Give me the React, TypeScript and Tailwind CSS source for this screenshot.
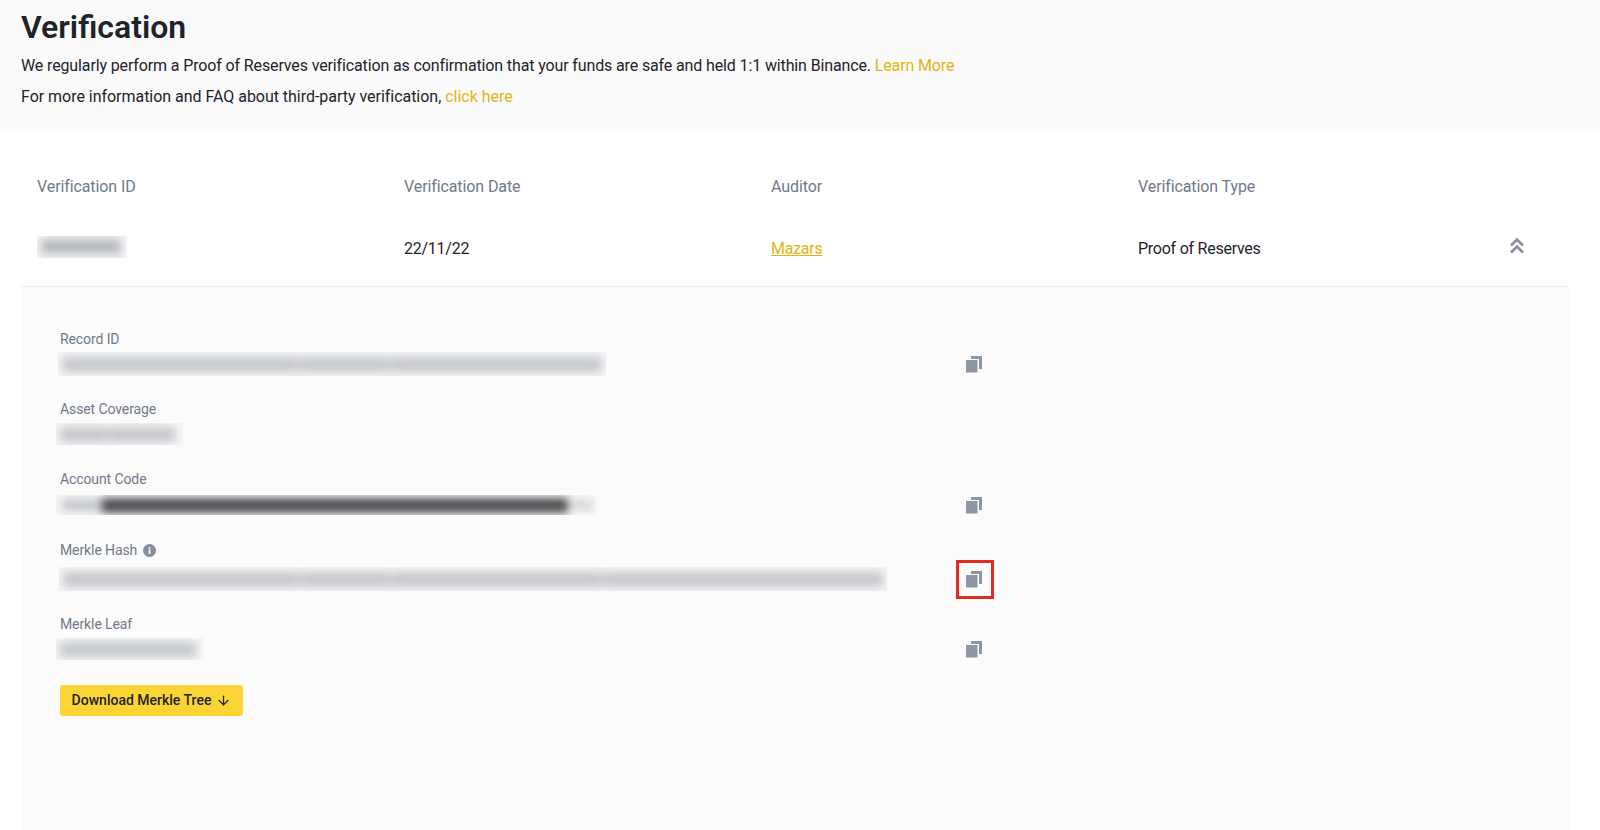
import { ArrowDown } from 'lucide-react';

const COLUMNS = ['Verification ID', 'Verification Date', 'Auditor', 'Verification Type'];

const CopyIcon = () => (
  <svg width="18" height="18" viewBox="0 0 18 18" fill="none" className="block">
    <path d="M6 1h11v13h-3V4H6V1z" fill="#8f96a3" />
    <rect x="1" y="5" width="11.5" height="12.5" fill="#8f96a3" />
  </svg>
);

const DoubleChevron = () => (
  <svg width="16" height="18" viewBox="0 0 16 18" fill="none" stroke="#848e9c" strokeWidth="2.6" className="block">
    <path d="M2 8.5l6-6 6 6" />
    <path d="M2 15.5l6-6 6 6" />
  </svg>
);

const InfoDot = () => (
  <svg width="13" height="13" viewBox="0 0 13 13" className="block">
    <circle cx="6.5" cy="6.5" r="6.5" fill="#848e9c" />
    <rect x="5.6" y="5.5" width="1.8" height="4.5" fill="#fafafa" />
    <rect x="5.6" y="3" width="1.8" height="1.7" fill="#fafafa" />
  </svg>
);

// redacted value: soft grey segments behind a blur
function Blurred({ widths, tone = 'bg-[#c4c7cb]', className = '' }: { widths: number[]; tone?: string; className?: string }) {
  return (
    <div className={`overflow-hidden bg-[#f6f6f7] ${className}`}>
      <div className="flex h-full items-center gap-[1px] px-[4px] blur-[5px]">
        {widths.map((w, i) => (
          <div key={i} className={`h-[15px] ${tone}`} style={{ width: w }} />
        ))}
      </div>
    </div>
  );
}

function Field({ label, info, bar, copy, boxed, className = '', valueClass = 'mt-[2px]' }: {
  label: string;
  info?: boolean;
  bar: React.ReactNode;
  copy?: boolean;
  boxed?: boolean;
  className?: string;
  valueClass?: string;
}) {
  return (
    <div className={className}>
      <div className="flex h-[20px] items-center gap-[6px] pl-[39px] text-[14px] tracking-[-0.1px] text-[#707a8a]">
        {label}
        {info && <InfoDot />}
      </div>
      <div className={`flex h-[26px] items-center pl-[35px] ${valueClass}`}>
        <div className="w-[899px] shrink-0">{bar}</div>
        {copy && (
          <div className={`flex h-[39px] w-[38px] shrink-0 items-center justify-center ${boxed ? 'ml-[1px] border-[3px] border-[#e02b20] pr-[2px]' : ''}`}>
            <CopyIcon />
          </div>
        )}
      </div>
    </div>
  );
}

export default function App() {
  return (
    <div className="h-[830px] w-[1600px] overflow-hidden bg-white font-['Roboto',sans-serif] text-[#1e2329]">
      {/* Header band */}
      <header className="h-[131px] bg-[#fafafa] px-[21px] pt-[8px]">
        <h1 className="text-[32px] font-semibold leading-[38px]">Verification</h1>
        <p className="mt-[8px] text-[16px] leading-[24px] tracking-[-0.13px]">
          We regularly perform a Proof of Reserves verification as confirmation that your funds are safe and held 1:1 within Binance.{' '}
          <span className="text-[#e3b40f]">Learn More</span>
        </p>
        <p className="mt-[7px] text-[16px] leading-[24px] tracking-[-0.03px]">
          For more information and FAQ about third-party verification,{' '}
          <span className="text-[#e3b40f]">click here</span>
        </p>
      </header>

      <div className="ml-[21px] mr-[31px]">
        {/* Table head */}
        <div className="grid grid-cols-[367px_367px_367px_1fr] px-[16px] pt-[44px] text-[16px] leading-[24px] tracking-[-0.1px] text-[#707a8a]">
          {COLUMNS.map(c => <div key={c}>{c}</div>)}
        </div>

        {/* Expanded row */}
        <div className="grid h-[88px] grid-cols-[367px_367px_367px_1fr] items-center border-b border-[#eaecef] px-[16px] pb-[1px] pt-[13px] text-[16px] tracking-[-0.25px]">
          <Blurred widths={[80]} tone="bg-[#b6b9bd]" className="mb-[4px] h-[22px] w-[90px]" />
          <div>22/11/22</div>
          <div className="text-[#e3b40f] underline">Mazars</div>
          <div className="flex items-center justify-between pr-[28px]">
            Proof of Reserves
            <div className="mb-[6px]"><DoubleChevron /></div>
          </div>
        </div>

        {/* Detail panel */}
        <div className="h-[543px] bg-[#fbfbfb] pt-[42px]">
          <Field label="Record ID" copy bar={<Blurred widths={[236, 90, 212]} className="ml-[2px] h-[24px] w-[548px]" />} />
          <Field label="Asset Coverage" className="mt-[22px]" bar={<Blurred widths={[48, 66]} className="h-[22px] w-[127px]" />} />
          <Field
            label="Account Code"
            className="mt-[22px]"
            valueClass="mt-[3px]"
            copy
            bar={
              <div className="h-[20px] w-[540px] overflow-hidden bg-[#f6f6f7]">
                <div className="flex h-full items-center blur-[4px]">
                  <div className="ml-[6px] h-[12px] w-[40px] bg-[#c4c7cb]" />
                  <div className="h-[15px] w-[466px] bg-[#4c4e50]" />
                  <div className="ml-[4px] h-[10px] w-[20px] bg-[#d4d6d9]" />
                </div>
              </div>
            }
          />
          <Field label="Merkle Hash" info className="mt-[22px]" valueClass="mt-[6px]" copy boxed bar={<Blurred widths={[236, 90, 212, 280]} className="ml-[3px] h-[24px] w-[828px]" />} />
          <Field label="Merkle Leaf" className="mt-[22px]" copy bar={<Blurred widths={[136]} className="h-[22px] w-[148px]" />} />
          <button className="ml-[39px] mt-[23px] flex h-[31px] w-[183px] items-center justify-center gap-[5px] rounded-[3px] bg-[#fcd535] text-[14px] font-medium text-[#1e2329]">
            Download Merkle Tree
            <ArrowDown size={15} strokeWidth={2} />
          </button>
        </div>
      </div>
    </div>
  );
}
